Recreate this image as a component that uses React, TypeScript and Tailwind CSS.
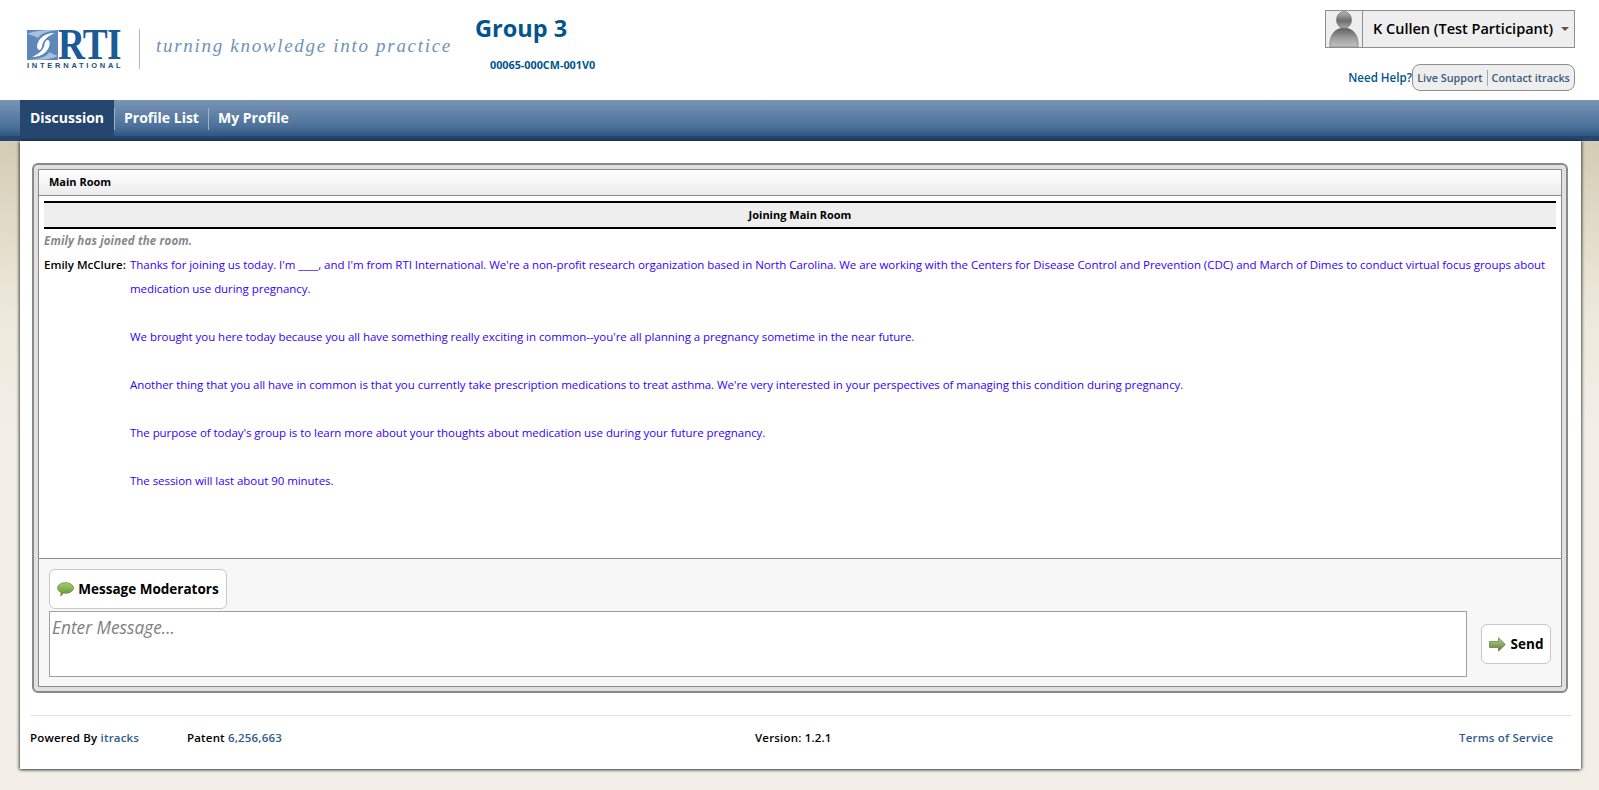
import React from "react";

const sans = "font-['Open_Sans','Noto_Sans',sans-serif]";

function Swirl() {
  return (
    <svg width="31" height="30" viewBox="0 0 37 30" preserveAspectRatio="none" className="shrink-0">
      <rect width="37" height="30" fill="#5f87ba" />
      <path d="M0 4 C8 1 18 0 30 0 L37 0 C26 1 17 3 13 8 C10 6 5 5 0 4Z" fill="#a9c0dc" />
      <path d="M12 17 C12 9 21 3 33 3 C25 6 19 10 18 16 C17 21 13 21 12 17Z" fill="#ffffff" />
      <path d="M27 13 C27 21 18 27 6 27 C14 24 20 20 21 14 C22 9 27 9 27 13Z" fill="#ffffff" />
      <path d="M37 26 C29 29 19 30 9 30 L4 30 C14 29 23 27 27 22 C30 24 34 25 37 26Z" fill="#a9c0dc" />
    </svg>
  );
}

function Avatar() {
  return (
    <svg width="30" height="36" viewBox="0 0 30 36">
      <defs>
        <linearGradient id="av" x1="0" y1="0" x2="0" y2="1">
          <stop offset="0" stopColor="#b5b5b5" />
          <stop offset="0.55" stopColor="#6e6e6e" />
          <stop offset="1" stopColor="#a8a8a8" />
        </linearGradient>
        <linearGradient id="av2" x1="0" y1="0" x2="0" y2="1">
          <stop offset="0" stopColor="#5c5c5c" />
          <stop offset="0.5" stopColor="#9a9a9a" />
          <stop offset="1" stopColor="#c4c4c4" />
        </linearGradient>
      </defs>
      <path d="M1 36 C0 24 6 17 15 17 C24 17 30 24 29 36Z" fill="url(#av2)" stroke="#666" strokeWidth="0.6" />
      <ellipse cx="15" cy="9" rx="7.5" ry="8.5" fill="url(#av)" stroke="#666" strokeWidth="0.6" />
    </svg>
  );
}

function Bubble() {
  return (
    <svg width="17" height="15" viewBox="0 0 17 15" className="shrink-0">
      <defs>
        <linearGradient id="bb" x1="0" y1="0" x2="0" y2="1">
          <stop offset="0" stopColor="#a6cf6c" />
          <stop offset="1" stopColor="#5f9130" />
        </linearGradient>
      </defs>
      <path d="M8.5 0.6 C13 0.6 16.5 3 16.5 6 C16.5 9 13 11.3 8.5 11.3 C7.8 11.3 7.2 11.3 6.6 11.2 L3.6 14 L4 10.4 C1.9 9.4 0.5 7.8 0.5 6 C0.5 3 4 0.6 8.5 0.6Z" fill="url(#bb)" stroke="#5c8434" strokeWidth="0.6" />
    </svg>
  );
}

function ArrowIcon() {
  return (
    <svg width="17" height="15" viewBox="0 0 17 15" className="shrink-0">
      <defs>
        <linearGradient id="ar" x1="0" y1="0" x2="0" y2="1">
          <stop offset="0" stopColor="#b9d08f" />
          <stop offset="1" stopColor="#5f8038" />
        </linearGradient>
      </defs>
      <path d="M0.5 4.5 H9.5 V0.8 L16.3 7.5 L9.5 14.2 V10.5 H0.5Z" fill="url(#ar)" stroke="#5a7a38" strokeWidth="0.7" />
    </svg>
  );
}

function Line({ children }: { children: React.ReactNode }) {
  return <div className="h-[24px] whitespace-nowrap">{children}</div>;
}

export default function App() {
  return (
    <div className={`h-[790px] w-[1599px] overflow-hidden flex flex-col bg-white ${sans}`}>
      <header className="h-[100px] flex justify-between shrink-0">
        <div className="flex items-start pl-[27px]">
          <div className="mt-[30px] flex flex-col w-[96px]">
            <div className="flex items-center h-[30px]">
              <Swirl />
              <span className="inline-block w-[65px] font-['Liberation_Serif',serif] font-bold text-[44px] leading-[30px] text-[#1a5a96] tracking-[-1px] scale-x-[0.85] origin-left whitespace-nowrap">RTI</span>
            </div>
            <span className="font-['Liberation_Sans',sans-serif] font-bold text-[7.5px] leading-[9px] tracking-[2.75px] text-[#1d4f80] mt-[1px] whitespace-nowrap">INTERNATIONAL</span>
          </div>
          <div className="w-px h-[40px] bg-[#a9bdd1] mt-[29px] ml-[16px]" />
          <div className="font-['Liberation_Serif',serif] italic text-[19px] leading-[22px] tracking-[1.7px] text-[#6f93b6] mt-[35px] ml-[16px] whitespace-nowrap w-[319px]">turning knowledge into practice</div>
          <div className="flex flex-col">
            <div className="text-[23.5px] leading-[30px] font-bold text-[#00548f] mt-[13px]">Group 3</div>
            <div className="text-[10.8px] leading-[14px] font-bold text-[#00548f] mt-[15px] ml-[15px]">00065-000CM-001V0</div>
          </div>
        </div>
        <div className="flex flex-col items-end pr-[24px] pt-[10px]">
          <div className="w-[250px] h-[38px] border border-[#8f8f8f] bg-[#eeeeee] flex items-center">
            <div className="w-[37px] h-full border-r border-[#8f8f8f] flex items-end justify-center">
              <Avatar />
            </div>
            <span className="ml-[10px] text-[14.5px] font-semibold text-black whitespace-nowrap">K Cullen (Test Participant)</span>
            <span className="ml-[8px] w-0 h-0 border-x-[4px] border-x-transparent border-t-[4px] border-t-[#555]" />
          </div>
          <div className="flex items-center mt-[16px]">
            <span className="text-[11.6px] font-semibold text-[#00548f]">Need Help?</span>
            <div className="h-[27px] w-[163px] border border-[#8f8f8f] rounded-[8px] bg-[#eeeeee] flex items-center justify-center text-[10.8px] font-semibold text-[#3a5a7c] whitespace-nowrap">
              <span className="pr-[4px] border-r border-[#a8a8a8] leading-[16px]">Live Support</span>
              <span className="pl-[4px] leading-[16px]">Contact itracks</span>
            </div>
          </div>
        </div>
      </header>

      <nav className="h-[41px] shrink-0 bg-gradient-to-b from-[#7a95b5] via-[#4a7099] via-[75%] to-[#2f5583] border-b-[5px] border-[#24466f] pl-[20px] flex text-white text-[14px] leading-[36px] font-bold">
        <div className="w-[94px] h-[41px] bg-[#24466f] text-center">Discussion</div>
        <div className="w-px h-[22px] bg-[#9fb3c9] mt-[8px]" />
        <div className="w-[93px] h-[36px] text-center">Profile List</div>
        <div className="w-px h-[22px] bg-[#9fb3c9] mt-[8px]" />
        <div className="ml-[9px] h-[36px]">My Profile</div>
      </nav>

      <main className="flex-1 bg-gradient-to-b from-[#d5ccb5] via-[#ece8d9] via-[25%] to-[#f3efe8] to-[45%] px-[20px]">
        <div className="h-[628px] w-[1561px] bg-white shadow-[-1px_1px_3px_rgba(0,0,0,0.6),1px_0_3px_rgba(0,0,0,0.6)] px-[12px] pt-[22px]">
          <div className="h-[530px] w-[1536px] border-2 border-[#8a8a8a] rounded-[6px] bg-[#e0e0e0] p-[4px]">
            <div className="h-full border border-[#8a8a8a] bg-white flex flex-col">
              <div className="h-[26px] shrink-0 bg-gradient-to-b from-white to-[#ececec] border-b border-[#8a8a8a] pl-[10px] flex items-center text-[11px] font-bold text-black">Main Room</div>
              <div className="flex-1 px-[5px] pt-[5px] overflow-hidden">
                <div className="h-[28px] bg-[#eeeeee] border-y-2 border-black flex items-center justify-center text-[11px] font-bold text-black">Joining Main Room</div>
                <div className="h-[24px] flex items-center text-[11.5px] tracking-[0.15px] font-bold italic text-[#888888]">Emily has joined the room.</div>
                <div className="flex text-[11.5px] leading-[24px]">
                  <div className="w-[86px] shrink-0 font-semibold text-black whitespace-nowrap">Emily McClure:</div>
                  <div className="text-[#3300ff] tracking-[-0.05px]">
                    <Line>Thanks for joining us today. I'm ____, and I'm from RTI International. We're a non-profit research organization based in North Carolina. We are working with the Centers for Disease Control and Prevention (CDC) and March of Dimes to conduct virtual focus groups about</Line>
                    <Line>medication use during pregnancy.</Line>
                    <Line>{"\u00a0"}</Line>
                    <Line>We brought you here today because you all have something really exciting in common--you're all planning a pregnancy sometime in the near future.</Line>
                    <Line>{"\u00a0"}</Line>
                    <Line>Another thing that you all have in common is that you currently take prescription medications to treat asthma. We're very interested in your perspectives of managing this condition during pregnancy.</Line>
                    <Line>{"\u00a0"}</Line>
                    <Line>The purpose of today's group is to learn more about your thoughts about medication use during your future pregnancy.</Line>
                    <Line>{"\u00a0"}</Line>
                    <Line>The session will last about 90 minutes.</Line>
                  </div>
                </div>
              </div>
              <div className="h-[128px] shrink-0 bg-[#f7f7f7] border-t border-[#8a8a8a] pl-[10px] pr-[10px] pt-[10px] flex flex-col">
                <button className="w-[178px] h-[40px] bg-white border border-[#c8c8c8] rounded-[6px] flex items-center justify-center gap-[4px] text-[13.5px] font-bold text-black whitespace-nowrap">
                  <Bubble />
                  Message Moderators
                </button>
                <div className="flex mt-[2px] items-center">
                  <div className="w-[1419px] h-[66px] bg-white border border-[#a0a0a0] pl-[2px] pt-[4px] text-[17.3px] leading-[24px] italic text-[#808080]">Enter Message...</div>
                  <button className="ml-[14px] w-[70px] h-[40px] bg-white border border-[#c8c8c8] rounded-[6px] flex items-center justify-center gap-[5px] text-[13.5px] font-bold text-black">
                    <ArrowIcon />
                    Send
                  </button>
                </div>
              </div>
            </div>
          </div>
          <div className="mt-[22px] -mx-[2px] border-t border-[#e4e4e4] flex items-center h-[44px] text-[11.5px] tracking-[0.18px] font-semibold text-black whitespace-nowrap">
            <span className="w-[157px]">Powered By <span className="text-[#2f5c8a]">itracks</span></span>
            <span className="w-[568px]">Patent <span className="text-[#2f5c8a]">6,256,663</span></span>
            <span className="w-[704px]">Version: 1.2.1</span>
            <span className="text-[#2f5c8a]">Terms of Service</span>
          </div>
        </div>
      </main>
    </div>
  );
}
